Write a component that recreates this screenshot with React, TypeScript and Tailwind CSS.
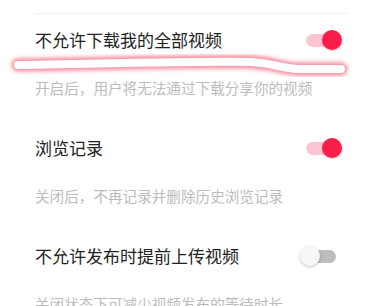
import React from "react";

interface SettingItem {
    title: string;
    desc: string;
    on: boolean;
}

const items: SettingItem[] = [
    { title: "不允许下载我的全部视频", desc: "开启后，用户将无法通过下载分享你的视频", on: true },
    { title: "浏览记录", desc: "关闭后，不再记录并删除历史浏览记录", on: true },
    { title: "不允许发布时提前上传视频", desc: "关闭状态下可减少视频发布的等待时长", on: false },
];

function Switch({ on }: { on: boolean }) {
    return (
        <div
            className={`relative h-[13px] w-[30px] rounded-full ${on ? "bg-[#fcc5d0]" : "bg-[#bdbdbd]"}`}
        >
            <div
                className={`absolute top-[-3.5px] h-[20px] w-[20px] rounded-full ${on
                    ? "left-[16px] bg-[#fb1e4a] shadow-[0_1px_2px_rgba(254,44,85,0.3)]"
                    : "left-[-6px] bg-[#f7f7f7] shadow-[0_1px_3px_rgba(0,0,0,0.25)]"
                    }`}
            />
        </div>
    );
}

export default function App() {
    return (
        <div
            className="relative h-[306px] w-[380px] overflow-hidden bg-white"
            style={{ fontFamily: '"Noto Sans CJK SC", "Noto Sans", sans-serif' }}
        >
            <div className="pt-[13px]">
                <div className="ml-[35px] mr-[33px] h-px bg-[#f0f0f0]" />
            </div>

            <div className="flex flex-col pl-[35px] pr-[44px] pt-[14px]">
                {items.map((item, i) => (
                    <div key={item.title} className={i > 0 ? "pt-[38px]" : ""}>
                        <div className="flex h-[24px] items-center justify-between">
                            <span className="text-[17px] leading-[24px] text-[#222222]">{item.title}</span>
                            <Switch on={item.on} />
                        </div>
                        <div className="mt-[26px] h-[20px] text-[14.6px] leading-[20px] text-[#bcbcbc]">
                            {item.desc}
                        </div>
                    </div>
                ))}
            </div>

            {/* hand-drawn highlight stroke */}
            <svg
                className="pointer-events-none absolute left-0 top-0"
                width="380"
                height="306"
                viewBox="0 0 380 306"
            >
                <defs>
                    <filter id="glow" x="-10%" y="-100%" width="120%" height="300%">
                        <feGaussianBlur stdDeviation="2.2" />
                    </filter>
                </defs>
                <path
                    d="M18 65 C 80 64, 200 61, 250 62 C 274 63, 282 69, 300 69 L 341 69"
                    fill="none"
                    stroke="#f0566c"
                    strokeOpacity="0.7"
                    strokeWidth="13"
                    strokeLinecap="round"
                    filter="url(#glow)"
                />
                <path
                    d="M18 65 C 80 64, 200 61, 250 62 C 274 63, 282 69, 300 69 L 341 69"
                    fill="none"
                    stroke="#ffffff"
                    strokeWidth="8"
                    strokeLinecap="round"
                />
            </svg>
        </div>
    );
}
